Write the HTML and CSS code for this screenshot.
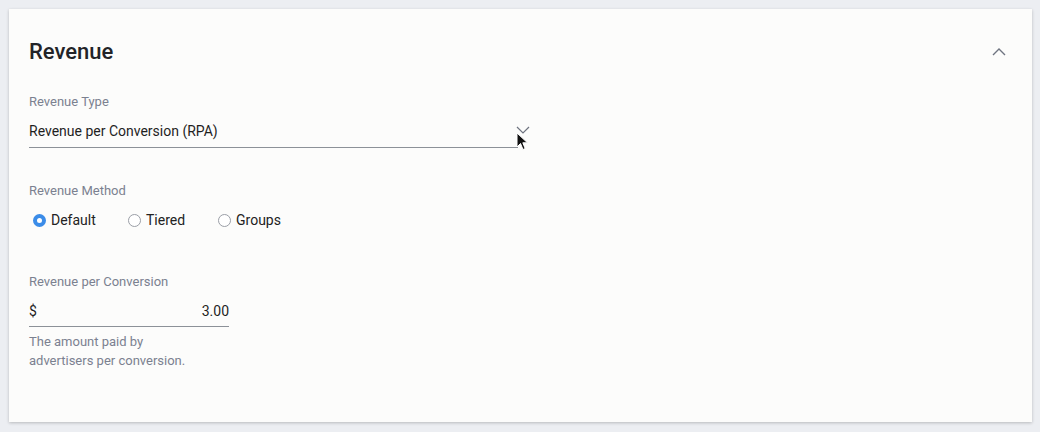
FILE: index.html
```html
<!DOCTYPE html>
<html lang="en">
<head>
<meta charset="utf-8">
<title>Revenue</title>
<link rel="stylesheet" href="styles.css">
</head>
<body>
<section class="card">
  <header class="card-head">
    <h2 class="card-title">Revenue</h2>
    <button class="collapse" aria-label="Collapse">
      <svg width="16" height="10" viewBox="0 0 16 10"><path d="M2 8 L8 2 L14 8" fill="none" stroke="#6f7480" stroke-width="1.4"/></svg>
    </button>
  </header>

  <div class="field field-type">
    <div class="label">Revenue Type</div>
    <div class="select">
      <span class="select-value">Revenue per Conversion (RPA)</span>
      <span class="select-arrow">
        <svg width="16" height="10" viewBox="0 0 16 10"><path d="M2 2 L8 8 L14 2" fill="none" stroke="#6f7480" stroke-width="1.2"/></svg>
      </span>
      <svg class="cursor" width="14" height="20" viewBox="0 0 14 20"><path d="M1 1 L1 15 L4.5 11.5 L7 17.5 L9.2 16.5 L6.8 10.8 L11.5 10.8 Z" fill="#111" stroke="#fff" stroke-width="1"/></svg>
    </div>
  </div>

  <div class="field field-method">
    <div class="label">Revenue Method</div>
    <div class="radios">
      <label class="radio checked"><span class="dot"></span>Default</label>
      <label class="radio"><span class="dot"></span>Tiered</label>
      <label class="radio"><span class="dot"></span>Groups</label>
    </div>
  </div>

  <div class="field field-amount">
    <div class="label">Revenue per Conversion</div>
    <div class="money">
      <span>$</span>
      <span>3.00</span>
    </div>
    <p class="help">The amount paid by<br>advertisers per conversion.</p>
  </div>
</section>
</body>
</html>
```

FILE: styles.css
```css
html, body {
  margin: 0;
  padding: 0;
}
body {
  background: #eceef2;
  font-family: Roboto, "Noto Sans", Arial, sans-serif;
  color: #212121;
  padding: 9px 8px 10px 9px;
  box-sizing: border-box;
  height: 432px;
}
.card {
  background: #fcfcfb;
  box-shadow: 0 1px 3px rgba(0,0,0,0.22);
  height: 413px;
  box-sizing: border-box;
  padding: 27px 20px 0 20px;
}
.card-head {
  display: flex;
  align-items: center;
  justify-content: space-between;
  height: 32px;
}
.card-title {
  margin: 0;
  font-size: 22px;
  font-weight: 500;
  color: #222428;
  line-height: 32px;
}
.collapse {
  background: none;
  border: 0;
  padding: 0;
  margin-right: 5px;
  width: 16px;
  height: 10px;
  display: flex;
  margin-top: 0;
}
.label {
  font-size: 13px;
  color: #7b8190;
  line-height: 16px;
}
.field-type {
  margin-top: 26px;
}
.select {
  position: relative;
  width: 489px;
  display: flex;
  align-items: center;
  justify-content: space-between;
  border-bottom: 1px solid #8c9198;
  height: 30px;
  margin-top: 7px;
}
.select-value {
  font-size: 14px;
  color: #1f1f1f;
  margin-top: -3px;
}
.select-arrow {
  display: flex;
  margin-right: -13px;
  margin-top: -5px;
}
.cursor {
  position: absolute;
  left: 487px;
  top: 15px;
}
.field-method {
  margin-top: 35px;
}
.radios {
  display: flex;
  margin-top: 12px;
  padding-left: 4px;
}
.radio {
  display: flex;
  align-items: center;
  font-size: 14px;
  color: #222;
  line-height: 18px;
}
.radio:nth-child(1) { width: 95px; }
.radio:nth-child(2) { width: 90px; }
.dot {
  width: 11px;
  height: 11px;
  border: 1px solid #9a9ea6;
  border-radius: 50%;
  margin-right: 5px;
  box-sizing: content-box;
  background: #fff;
}
.radio.checked .dot {
  background: #fff;
  border: 4px solid #3b8ce8;
  width: 5px;
  height: 5px;
}
.field-amount {
  margin-top: 45px;
}
.money {
  width: 200px;
  display: flex;
  justify-content: space-between;
  font-size: 14px;
  color: #1f1f1f;
  border-bottom: 1px solid #8c9198;
  height: 32px;
  align-items: center;
  margin-top: 4px;
}
.money span {
  margin-top: 2px;
}
.help {
  margin: 5px 0 0;
  font-size: 13px;
  color: #7b8190;
  line-height: 19px;
}
```
